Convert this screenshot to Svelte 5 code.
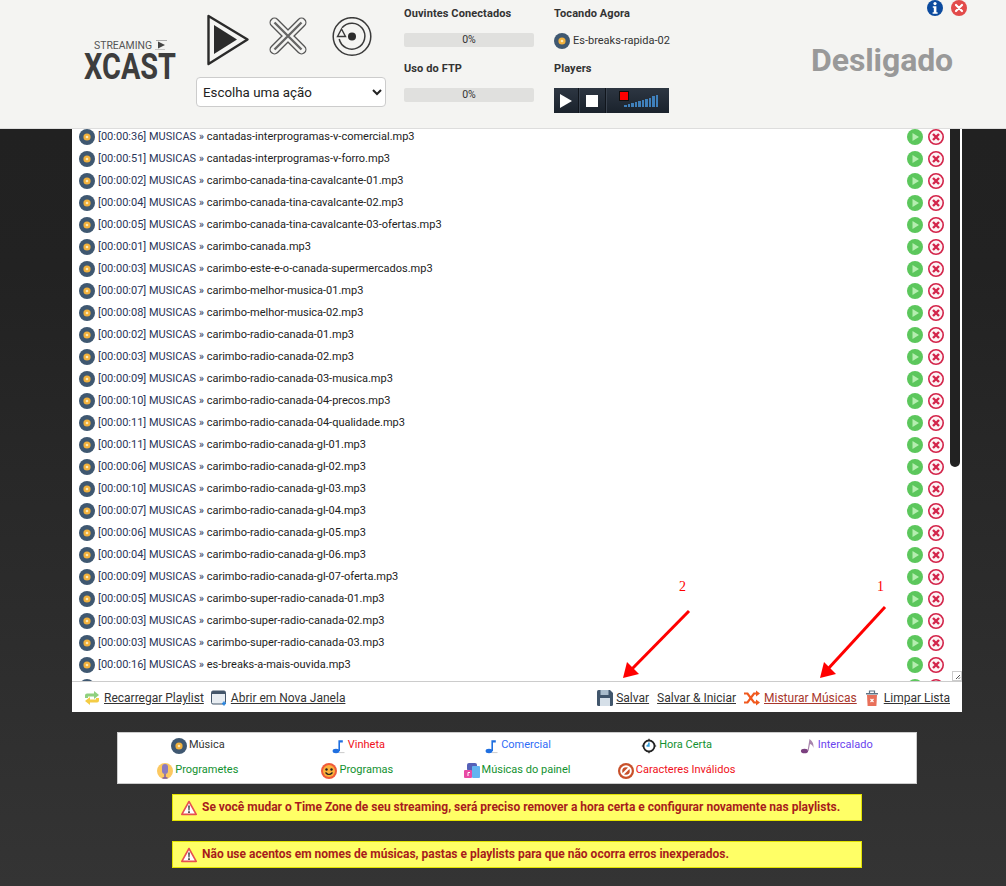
<script>
  const files = [
    ['00:00:36','cantadas-interprogramas-v-comercial'],
    ['00:00:51','cantadas-interprogramas-v-forro'],
    ['00:00:02','carimbo-canada-tina-cavalcante-01'],
    ['00:00:04','carimbo-canada-tina-cavalcante-02'],
    ['00:00:05','carimbo-canada-tina-cavalcante-03-ofertas'],
    ['00:00:01','carimbo-canada'],
    ['00:00:03','carimbo-este-e-o-canada-supermercados'],
    ['00:00:07','carimbo-melhor-musica-01'],
    ['00:00:08','carimbo-melhor-musica-02'],
    ['00:00:02','carimbo-radio-canada-01'],
    ['00:00:03','carimbo-radio-canada-02'],
    ['00:00:09','carimbo-radio-canada-03-musica'],
    ['00:00:10','carimbo-radio-canada-04-precos'],
    ['00:00:11','carimbo-radio-canada-04-qualidade'],
    ['00:00:11','carimbo-radio-canada-gl-01'],
    ['00:00:06','carimbo-radio-canada-gl-02'],
    ['00:00:10','carimbo-radio-canada-gl-03'],
    ['00:00:07','carimbo-radio-canada-gl-04'],
    ['00:00:06','carimbo-radio-canada-gl-05'],
    ['00:00:04','carimbo-radio-canada-gl-06'],
    ['00:00:09','carimbo-radio-canada-gl-07-oferta'],
    ['00:00:05','carimbo-super-radio-canada-01'],
    ['00:00:03','carimbo-super-radio-canada-02'],
    ['00:00:03','carimbo-super-radio-canada-03'],
    ['00:00:16','es-breaks-a-mais-ouvida'],
    null
  ];
  const bars = [2,3,4,5,6,7,8,9,11,12];
</script>

{#snippet disc()}
  <svg class="ic" viewBox="0 0 16 16"><circle cx="8" cy="8" r="8" fill="#3f5871"/><circle cx="8" cy="8" r="3.6" fill="#f2b13c"/><circle cx="8" cy="8" r="1.3" fill="#fbe9b8"/></svg>
{/snippet}
{#snippet warn()}
  <svg class="ic" viewBox="0 0 16 16"><path d="M8 1.5 15.2 14.4H.8Z" fill="#fff" stroke="#e8504f" stroke-width="1.6" stroke-linejoin="round"/><path d="M7.2 5.5h1.6l-.3 5h-1zM7.2 11.3h1.6v1.6H7.2z" fill="#333"/></svg>
{/snippet}
{#snippet note(c)}
  <svg class="ic" viewBox="0 0 16 16"><ellipse cx="6" cy="13" rx="3.4" ry="2.2" fill={c}/><path d="M8.4 13V2.2h4.4v2.2H10V13Z" fill={c}/><path d="M9 14.6h5.5" stroke="#ccc" stroke-width="1"/></svg>
{/snippet}

<div class="page">
  <header class="top">
    <div class="logo">
      <svg width="92" height="54" viewBox="0 0 92 54">
        <text x="10" y="11" font-size="10.5" fill="#555" class="logofont" textLength="58" lengthAdjust="spacingAndGlyphs">STREAMING</text>
        <path d="M74 3.500 81 7l-7 3.500Z" fill="#444"/><path d="M72 2.500h11" stroke="#999" stroke-width=".8"/><path d="M71 11.500h10" stroke="#bbb" stroke-width=".8"/>
        <text x="0" y="41" font-size="37" font-weight="700" fill="#3d3d3d" class="logofont" textLength="92" lengthAdjust="spacingAndGlyphs">XCAST</text>
      </svg>
    </div>
    <div class="actions">
      <div class="bigicons">
        <svg width="42" height="52" viewBox="0 0 42 52"><path d="M1.5 2 40.5 25.500 1.500 50Z" fill="#f4f4f2" stroke="#2a2a2a" stroke-width="2.400" stroke-linejoin="round"/><path d="M7 11 30 25.500 7 40Z" fill="#2b2b2b"/></svg>
        <svg width="38" height="38" viewBox="0 0 38 38">
          <path d="M5.500 5.500 32.500 32.500M32.500 5.500 5.500 32.500" stroke="#555" stroke-width="10" stroke-linecap="round" fill="none"/>
          <path d="M5.500 5.500 32.500 32.500M32.500 5.500 5.500 32.500" stroke="#f4f4f2" stroke-width="7.400" stroke-linecap="round" fill="none"/>
          <path d="M5.500 5.500 32.500 32.500M32.500 5.500 5.500 32.500" stroke="#666" stroke-width="2.400" fill="none"/>
        </svg>
        <svg width="40" height="40" viewBox="0 0 40 40"><circle cx="20" cy="19.500" r="18.800" fill="none" stroke="#3a3a3a" stroke-width="1.500"/><path d="M10 10.700A13 13 0 1 1 7.200 22" fill="none" stroke="#3a3a3a" stroke-width="1.500"/><path d="M5.500 19.500 9.500 12 13.500 19.500Z" fill="#f4f4f2" stroke="#3a3a3a" stroke-width="1.400"/><circle cx="20" cy="19.500" r="4" fill="#2b2b2b"/></svg>
      </div>
      <select class="sel"><option>Escolha uma ação</option></select>
    </div>
    <div class="stats">
      <div class="col">
        <b>Ouvintes Conectados</b>
        <div class="bar">0%</div>
        <b>Uso do FTP</b>
        <div class="bar">0%</div>
      </div>
      <div class="col">
        <b>Tocando Agora</b>
        <div class="now">{@render disc()}<span>Es-breaks-rapida-02</span></div>
        <b>Players</b>
        <div class="player">
          <div class="pcell p1"><svg width="14" height="14" viewBox="0 0 14 14"><path d="M1 0 13 7 1 14Z" fill="#fff"/></svg></div>
          <div class="pcell p2"><span class="stop"></span></div>
          <div class="pcell p3">
            <span class="rec"></span>
            <div class="vol">{#each bars as h}<i style="height:{h}px"></i>{/each}</div>
          </div>
        </div>
      </div>
    </div>
    <div class="status">
      <div class="topicons">
        <svg class="ic" viewBox="0 0 16 16"><circle cx="8" cy="8" r="8" fill="#0b4a9e"/><circle cx="8" cy="3.600" r="1.600" fill="#fff"/><path d="M5.800 6.300h3.600v6h1.200v1.500H5.600v-1.500h1.200V7.800h-1Z" fill="#fff"/></svg>
        <svg class="ic" viewBox="0 0 16 16"><circle cx="8" cy="8" r="8" fill="#e24a4a"/><path d="M5 5l6 6M11 5l-6 6" stroke="#fff" stroke-width="2.200" stroke-linecap="round"/></svg>
      </div>
      <div class="off">Desligado</div>
    </div>
  </header>

  <main class="panel">
    <div class="listwrap">
      <ul class="list">
        {#each files as f}
          <li>
            {@render disc()}
            <span class="name">{#if f}<span class="tag">[{f[0]}] MUSICAS »</span> {f[1]}.mp3{/if}</span>
            <span class="btns">
              <svg class="ic" viewBox="0 0 16 16"><circle cx="8" cy="8" r="8" fill="#5cc75c"/><path d="M5.500 4 12 8l-6.500 4Z" fill="#b5eeb0"/></svg>
              <svg class="ic" viewBox="0 0 16 16"><circle cx="8" cy="8" r="7.200" fill="#fdf3f5" stroke="#d3244a" stroke-width="1.600"/><path d="M5 5l6 6M11 5l-6 6" stroke="#d3244a" stroke-width="2.400"/></svg>
            </span>
          </li>
        {/each}
      </ul>
      <div class="track"><div class="thumb"></div></div>
      <svg class="grip" width="10" height="10" viewBox="0 0 10 10"><rect x=".5" y=".5" width="9" height="9" fill="#fff" stroke="#ccc"/><path d="M8 4 4 8M8 6.500 6.500 8" stroke="#555" stroke-width="1"/></svg>
    </div>
    <div class="tools">
      <div class="group">
        <span class="tool">
          <svg class="ic" viewBox="0 0 16 16"><path d="M1 8V5.500Q1 3.500 3 3.500h7V1l5 4-5 4V6.500H4V8Z" fill="#8fd07e"/><path d="M15 8v2.500q0 2-2 2H6V15L1 11l5-4v2.500h6V8Z" fill="#f4cc45"/></svg>
          <u>Recarregar Playlist</u>
        </span>
        <span class="tool">
          <svg class="ic" viewBox="0 0 16 16"><rect x=".5" y="1" width="14" height="13" rx="1.500" fill="#e8edf2" stroke="#44566a"/><path d="M.5 2.500q0-1.500 1.500-1.500h11q1.500 0 1.500 1.500V4H.5Z" fill="#44566a"/><path d="M11 13.500h4M13 11.500v4" stroke="#2a86e0" stroke-width="1.600"/></svg>
          <u>Abrir em Nova Janela</u>
        </span>
      </div>
      <div class="group right">
        <span class="tool save">
          <svg class="ic" viewBox="0 0 16 16"><path d="M0 1.500Q0 0 1.500 0H13l3 3v11.500q0 1.500-1.500 1.500h-13Q0 16 0 14.500Z" fill="#41566c"/><rect x="3.500" y="0" width="8" height="5" fill="#a9bccb"/><rect x="3" y="8" width="10" height="8" fill="#d5dfe8"/></svg>
          <u>Salvar</u>
        </span>
        <span class="tool both"><u>Salvar &amp; Iniciar</u></span>
        <span class="tool mix">
          <svg class="ic" viewBox="0 0 16 16"><path d="M0 3.500h3.500L10 12.500h2.500M0 12.500h3.500L10 3.500h2.500" fill="none" stroke="#f0591e" stroke-width="2.200"/><path d="M12 .5 16 3.500 12 6.500ZM12 9.500 16 12.500 12 15.500Z" fill="#f0591e"/></svg>
          <u>Misturar Músicas</u>
        </span>
        <span class="tool">
          <svg class="ic" viewBox="0 0 16 16"><path d="M2 3h12v1.500H2Z" fill="#5e7384"/><path d="M5.500 3V1h5v2" fill="none" stroke="#5e7384" stroke-width="1.200"/><path d="M3 5h10l-.6 11H3.600Z" fill="#e8705a"/><path d="M6.500 9l3 3M9.500 9l-3 3" stroke="#fff" stroke-width="1.100"/></svg>
          <u>Limpar Lista</u>
        </span>
      </div>
    </div>
    <span class="mark m1">1</span>
    <span class="mark m2">2</span>
    <svg class="arrows" width="890" height="90" viewBox="0 0 890 90">
      <path d="M813 8 755 71" stroke="#f00" stroke-width="3"/>
      <path d="M748 79 752 63 758 69 764 75Z" fill="#f00"/>
      <path d="M617 12 558 72" stroke="#f00" stroke-width="3"/>
      <path d="M551 79 555 63 561 69 567 75Z" fill="#f00"/>
    </svg>
  </main>

  <section class="legend">
    <span class="lg">{@render disc()}<em class="c-d">Música</em></span>
    <span class="lg">{@render note('#1f6fe0')}<em class="c-r">Vinheta</em></span>
    <span class="lg">{@render note('#1f6fe0')}<em class="c-b">Comercial</em></span>
    <span class="lg"><svg class="ic" viewBox="0 0 16 16"><circle cx="8" cy="8" r="5.500" fill="#fff" stroke="#222" stroke-width="1.800"/><path d="M8 .8v2M8 13.200v2M.8 8h2M13.200 8h2" stroke="#222" stroke-width="1.200"/><path d="M8 4.500V8H5.500" fill="#38a3e0" stroke="#38a3e0" stroke-width="1.400"/></svg><em class="c-g">Hora Certa</em></span>
    <span class="lg"><svg class="ic" viewBox="0 0 16 16"><ellipse cx="4.500" cy="13" rx="3.600" ry="2.300" fill="#7b3f7f"/><path d="M7.500 13 9.500 1q4.500 3 4 9-1-3.500-3.500-4L8.500 13Z" fill="#a884ac"/></svg><em class="c-v">Intercalado</em></span>
    <span class="lg"><svg class="ic" viewBox="0 0 16 16"><circle cx="8" cy="8" r="8" fill="#fcc860"/><rect x="5" y="1" width="6" height="10" rx="3" fill="#8a7ac0"/><path d="M8 11v4M5.500 15h5" stroke="#7a5aa8" stroke-width="1.400"/></svg><em class="c-g">Programetes</em></span>
    <span class="lg"><svg class="ic" viewBox="0 0 16 16"><circle cx="8" cy="8" r="8" fill="#ef5a3a"/><circle cx="8" cy="8" r="6" fill="#fbb03b"/><circle cx="5.500" cy="6.500" r="1.200" fill="#222"/><circle cx="10.500" cy="6.500" r="1.200" fill="#222"/><path d="M4.500 9.500q3.500 4 7 0" fill="none" stroke="#222" stroke-width="1.200"/></svg><em class="c-g">Programas</em></span>
    <span class="lg"><svg class="ic" viewBox="0 0 16 16"><rect x="3" y="0" width="10" height="8" rx="2" fill="#5560b8"/><rect x="8" y="3" width="8" height="12" rx="1" fill="#62b4f0"/><rect x="0" y="7" width="8" height="8" rx="1" fill="#e84aa5"/><path d="M4 13V9.500h2" fill="none" stroke="#fff"/></svg><em class="c-g">Músicas do painel</em></span>
    <span class="lg"><svg class="ic" viewBox="0 0 16 16"><circle cx="8" cy="8" r="8" fill="#c8502a"/><circle cx="8" cy="8" r="4.800" fill="none" stroke="#fff" stroke-width="2"/><path d="M4.500 11.500l7-7" stroke="#fff" stroke-width="2"/></svg><em class="c-r">Caracteres Inválidos</em></span>
  </section>

  <div class="notice">{@render warn()}<b>Se você mudar o Time Zone de seu streaming, será preciso remover a hora certa e configurar novamente nas playlists.</b></div>
  <div class="notice second">{@render warn()}<b>Não use acentos em nomes de músicas, pastas e playlists para que não ocorra erros inexperados.</b></div>
</div>

<style>
  :global(body) { margin: 0; background: #2b2b2b; }
  .page {
    width: 1006px; height: 886px; overflow: hidden;
    background: linear-gradient(180deg, #202020 0%, #222 30%, #343434 100%);
    font-family: Roboto, "Liberation Sans", sans-serif; font-size: 11px; color: #333;
  }
  .ic { width: 16px; height: 16px; flex: none; display: block; }

  .top {
    position: relative; z-index: 2;
    height: 128px; background: #f4f4f2; border-bottom: 1px solid #ddd;
    display: flex;
  }
  .logo { margin-left: 84px; padding-top: 38px; width: 92px; margin-right: 20px; }
  .logofont { font-family: Roboto, sans-serif; }
  .actions { width: 190px; margin-right: 18px; }
  .bigicons { display: flex; align-items: flex-start; padding: 14px 0 0 11px; height: 77px; box-sizing: border-box; }
  .bigicons svg:nth-child(2) { margin: 3px 0 0 20px; }
  .bigicons svg:nth-child(3) { margin: 3px 0 0 25px; }
  .sel {
    display: block; width: 190px; height: 30px; font: 13.33px Roboto, sans-serif; color: #222;
    background-color: #fff; border: 1px solid #ccc; border-radius: 4px; padding: 0 2px;
  }
  .stats { display: flex; gap: 20px; }
  .col { width: 130px; padding-top: 6px; display: flex; flex-direction: column; }
  .col:nth-child(2) { width: 115px; }
  .col b { box-sizing: border-box; padding-top: 1px; font-size: 11px; line-height: 14px; font-weight: 700; height: 27px; color: #333; letter-spacing: .1px; white-space: nowrap; }
  .bar {
    height: 14px; line-height: 14px; background: #e0e0de; border-radius: 2px; text-align: center; font-size: 10.5px;
    margin-bottom: 14px;
  }
  .now { display: flex; align-items: center; gap: 3px; height: 16px; margin-bottom: 12px; white-space: nowrap; }
  .now span { margin-top: -2px; }
  .player { height: 25px; width: 115px; display: flex; background: linear-gradient(180deg, #2d3642, #1a222c); }
  .pcell { box-sizing: border-box; display: flex; align-items: center; justify-content: center; border-right: 1px solid #10151c; box-shadow: 1px 0 0 #3a434f; }
  .p1 { width: 25px; }
  .p2 { width: 27px; }
  .p3 { flex: 1; border: 0; box-shadow: none; position: relative; }
  .stop { width: 12px; height: 12px; background: #fff; }
  .rec { position: absolute; left: 13px; top: 3px; width: 8px; height: 8px; background: #f00; border: 1px solid #111; }
  .vol { position: absolute; left: 18px; bottom: 6px; display: flex; align-items: flex-end; gap: 1px; }
  .vol i { display: block; width: 2.500px; background: #3f80bb; }

  .status { flex: 1; position: relative; }
  .topicons { position: absolute; right: 39px; top: 0; display: flex; gap: 8px; }
  .off { position: absolute; left: 142px; top: 41px; font-size: 32px; line-height: 38px; font-weight: 700; color: #999; letter-spacing: -.1px; }

  .panel { position: relative; width: 890px; margin-left: 72px; background: #fff; z-index: 1; }
  .listwrap { position: relative; height: 552px; overflow: hidden; }
  .list { list-style: none; margin: -4px 0 0; padding: 0 0 0 7px; }
  .list li { height: 22px; display: flex; align-items: center; gap: 3px; font-size: 11px; color: #222; position: relative; }
  .list li > :global(svg) { margin-top: 2px; }
  .name { flex: 1; white-space: nowrap; }
  .tag { color: #2a3558; }
  .btns { display: flex; gap: 5px; margin-right: 18px; margin-top: 2px; }
  .track { position: absolute; right: 2px; top: 0; bottom: 0; width: 10px; background: #fff; }
  .thumb { height: 338px; background: #222; border-radius: 0 0 5px 5px; }
  .grip { position: absolute; right: 0; bottom: 0; }

  .tools {
    box-sizing: border-box; height: 31px; border-top: 1px solid #ccc; display: flex; justify-content: space-between; align-items: center;
    padding: 2px 12px 0 12px; font-size: 12px; color: #333;
  }
  .group { display: flex; gap: 7px; }
  .both { margin-right: 1px; margin-left: 1px; }
  .tool { display: flex; align-items: center; gap: 4px; white-space: nowrap; }
  .save { gap: 3px; }
  .mix { color: #a8372d; }
  .mark { position: absolute; font: 14px "Liberation Serif", serif; color: #f00; }
  .m1 { left: 805px; top: 450px; }
  .m2 { left: 607px; top: 450px; }
  .arrows { position: absolute; left: 0; top: 470px; pointer-events: none; }

  .legend {
    width: 798px; margin: 20px 0 0 117px; height: 50px; background: #fff; border: 1px solid #ccc;
    display: grid; grid-template-columns: repeat(5, 1fr); grid-auto-rows: 25px; justify-items: center; align-items: center;
  }
  .lg { display: flex; align-items: center; gap: 2px; white-space: nowrap; }
  .lg em { font-style: normal; font-size: 11px; margin-top: -2px; }
  .c-d { color: #333; } .c-r { color: #f01020; } .c-b { color: #2f6cf6; } .c-g { color: #12912f; } .c-v { color: #6a44ee; }

  .notice {
    width: 690px; height: 27px; box-sizing: border-box; margin: 10px 0 0 172px; padding-left: 8px;
    display: flex; align-items: center; gap: 5px; background: #ffff66; border: 1px solid #e2e200;
    color: #a81c1c; font-size: 12px; white-space: nowrap;
  }
  .notice b { margin-top: -2px; }
  .notice.second { margin-top: 20px; }
</style>
